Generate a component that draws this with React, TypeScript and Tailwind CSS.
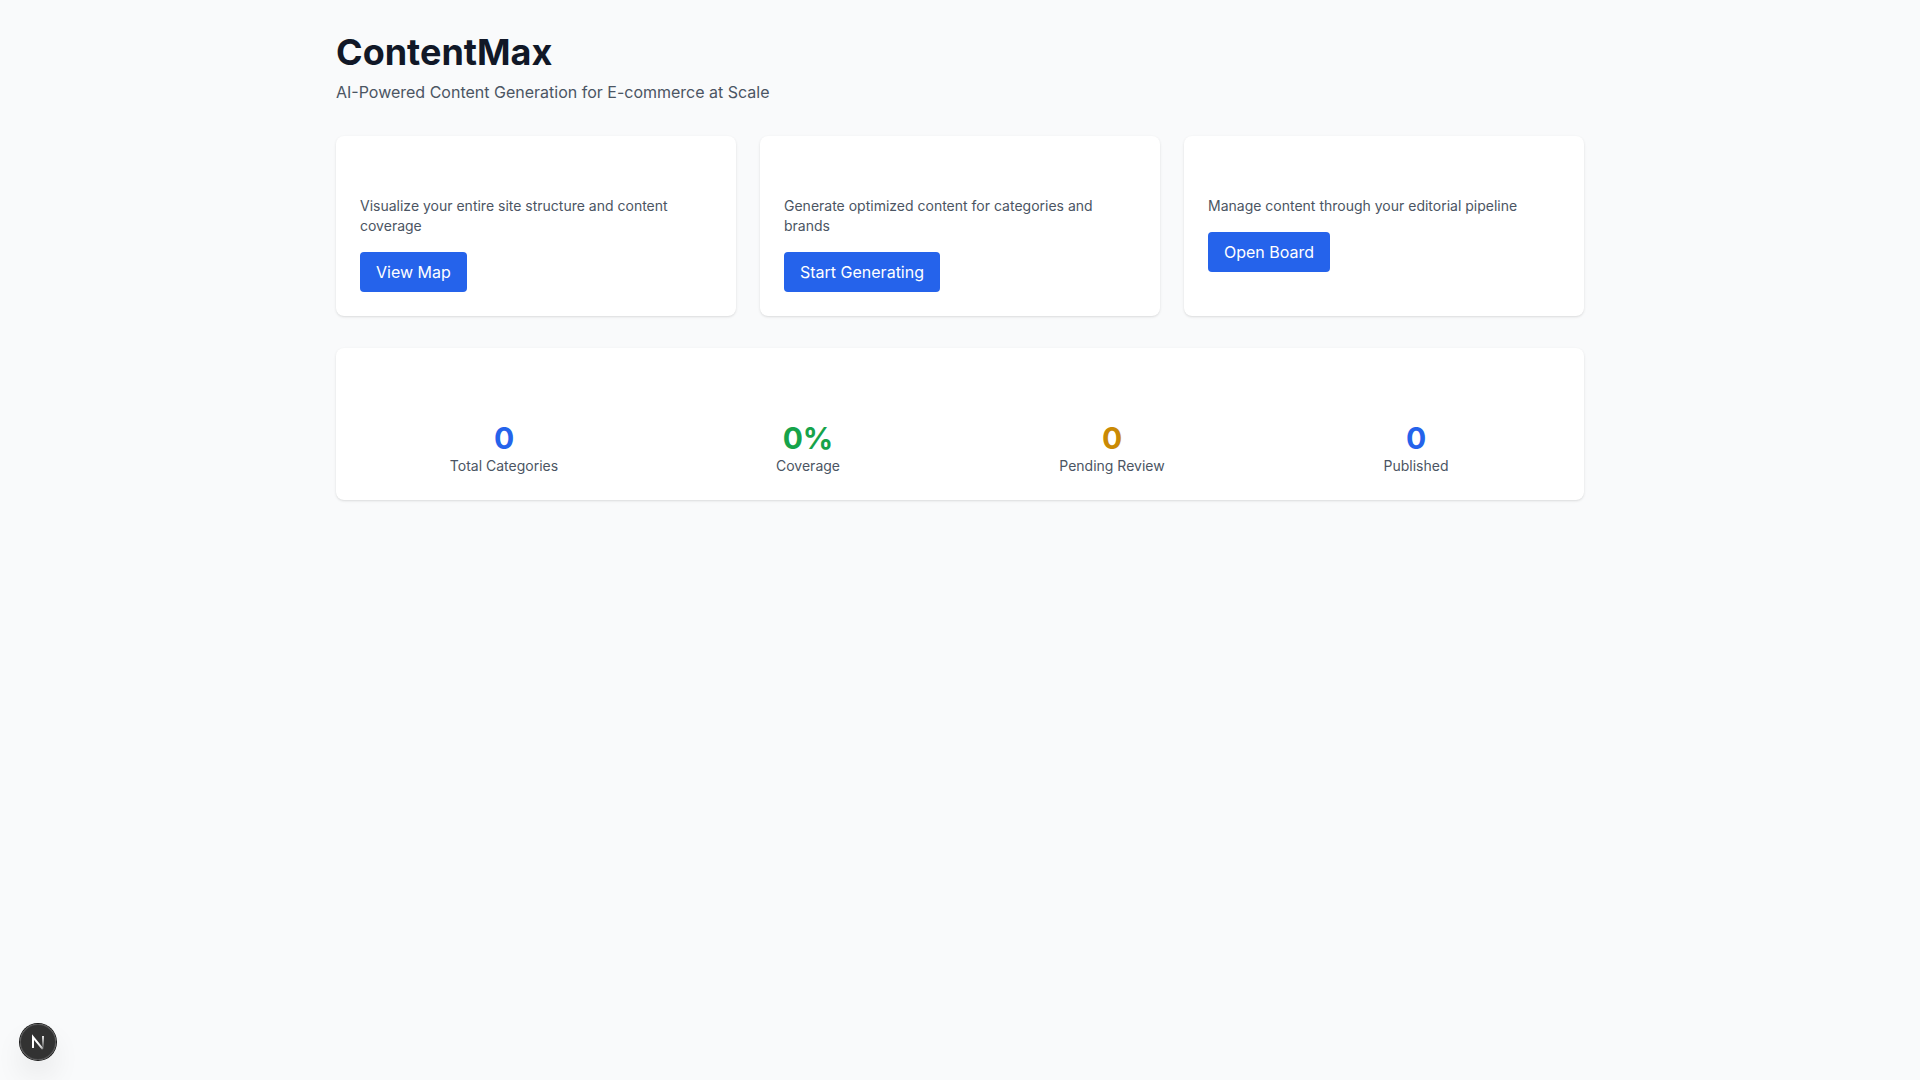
const actions = [
  { text: "Visualize your entire site structure and content coverage", label: "View Map" },
  { text: "Generate optimized content for categories and brands", label: "Start Generating" },
  { text: "Manage content through your editorial pipeline", label: "Open Board" },
];

const stats = [
  { value: "0", label: "Total Categories", color: "text-[#2563eb]" },
  { value: "0%", label: "Coverage", color: "text-[#16a34a]" },
  { value: "0", label: "Pending Review", color: "text-[#ca8a04]" },
  { value: "0", label: "Published", color: "text-[#2563eb]" },
];

function DevToolsBadge() {
  return (
    <button
      type="button"
      aria-label="Open Next.js Dev Tools"
      className="fixed bottom-5 left-5 flex size-9 items-center justify-center rounded-full bg-black/80 shadow-[0_0_0_1px_#171717,inset_0_0_0_1px_rgba(255,255,255,0.14),0_16px_32px_-8px_rgba(0,0,0,0.24)]"
    >
      <svg width="36" height="36" viewBox="0 0 36 36" fill="none" aria-hidden="true">
        <defs>
          <linearGradient id="diagonal" x1="18" y1="18" x2="24" y2="26" gradientUnits="userSpaceOnUse">
            <stop stopColor="white" />
            <stop offset="0.6" stopColor="white" stopOpacity="0.8" />
            <stop offset="1" stopColor="white" stopOpacity="0.1" />
          </linearGradient>
          <linearGradient id="stem" x1="23" y1="12" x2="23" y2="24" gradientUnits="userSpaceOnUse">
            <stop stopColor="white" stopOpacity="0.9" />
            <stop offset="1" stopColor="white" stopOpacity="0.1" />
          </linearGradient>
        </defs>
        <path d="M13 24V13L22.8 25.2" stroke="url(#diagonal)" strokeWidth="2" />
        <path d="M23 12V24" stroke="url(#stem)" strokeWidth="2" />
      </svg>
    </button>
  );
}

export default function App() {
  return (
    <div className="min-h-screen bg-[#f9fafb] font-['Inter',sans-serif] text-[#111827]">
      <main className="mx-auto max-w-7xl px-4 py-8">
        <header className="mb-8">
          <h1 className="text-4xl font-bold">ContentMax</h1>
          <p className="mt-2 text-[#4b5563]">AI-Powered Content Generation for E-commerce at Scale</p>
        </header>
        <section className="mb-8 grid grid-cols-1 gap-6 md:grid-cols-3">
          {actions.map((a) => (
            <article key={a.label} className="rounded-lg bg-white p-6 pt-15 shadow-sm">
              <p className="mb-4 text-sm text-[#4b5563]">{a.text}</p>
              <button type="button" className="rounded bg-[#2563eb] px-4 py-2 text-white">{a.label}</button>
            </article>
          ))}
        </section>
        <section className="rounded-lg bg-white p-6 pt-18 shadow-sm">
          <div className="grid grid-cols-2 gap-4 md:grid-cols-4">
            {stats.map((s) => (
              <div key={s.label} className="text-center">
                <div className={"text-3xl font-bold " + s.color}>{s.value}</div>
                <div className="text-sm text-[#4b5563]">{s.label}</div>
              </div>
            ))}
          </div>
        </section>
      </main>
      <DevToolsBadge />
    </div>
  );
}
